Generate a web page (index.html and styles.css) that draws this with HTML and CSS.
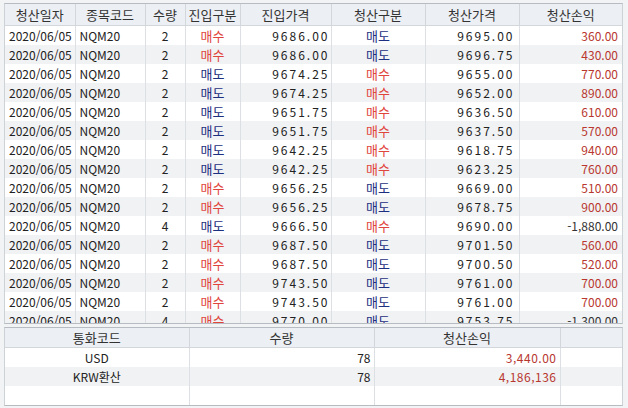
FILE: index.html
```html
<!DOCTYPE html>
<html lang="ko">
<head>
<meta charset="utf-8">
<link rel="stylesheet" href="styles.css">
</head>
<body>
<div class="screen">
  <div class="grid-main">
    <table class="grid">
      <colgroup>
        <col class="c1"><col class="c2"><col class="c3"><col class="c4"><col class="c5"><col class="c6"><col class="c7"><col class="c8">
      </colgroup>
      <thead>
        <tr><th>청산일자</th><th>종목코드</th><th>수량</th><th>진입구분</th><th>진입가격</th><th>청산구분</th><th>청산가격</th><th>청산손익</th></tr>
      </thead>
      <tbody>
        <tr><td class="l">2020/06/05</td><td class="l">NQM20</td><td class="c">2</td><td class="c ko buy">매수</td><td class="r p1">9686.00</td><td class="c ko sell">매도</td><td class="r p2">9695.00</td><td class="r pl pos">360.00</td></tr>
        <tr><td class="l">2020/06/05</td><td class="l">NQM20</td><td class="c">2</td><td class="c ko buy">매수</td><td class="r p1">9686.00</td><td class="c ko sell">매도</td><td class="r p2">9696.75</td><td class="r pl pos">430.00</td></tr>
        <tr><td class="l">2020/06/05</td><td class="l">NQM20</td><td class="c">2</td><td class="c ko sell">매도</td><td class="r p1">9674.25</td><td class="c ko buy">매수</td><td class="r p2">9655.00</td><td class="r pl pos">770.00</td></tr>
        <tr><td class="l">2020/06/05</td><td class="l">NQM20</td><td class="c">2</td><td class="c ko sell">매도</td><td class="r p1">9674.25</td><td class="c ko buy">매수</td><td class="r p2">9652.00</td><td class="r pl pos">890.00</td></tr>
        <tr><td class="l">2020/06/05</td><td class="l">NQM20</td><td class="c">2</td><td class="c ko sell">매도</td><td class="r p1">9651.75</td><td class="c ko buy">매수</td><td class="r p2">9636.50</td><td class="r pl pos">610.00</td></tr>
        <tr><td class="l">2020/06/05</td><td class="l">NQM20</td><td class="c">2</td><td class="c ko sell">매도</td><td class="r p1">9651.75</td><td class="c ko buy">매수</td><td class="r p2">9637.50</td><td class="r pl pos">570.00</td></tr>
        <tr><td class="l">2020/06/05</td><td class="l">NQM20</td><td class="c">2</td><td class="c ko sell">매도</td><td class="r p1">9642.25</td><td class="c ko buy">매수</td><td class="r p2">9618.75</td><td class="r pl pos">940.00</td></tr>
        <tr><td class="l">2020/06/05</td><td class="l">NQM20</td><td class="c">2</td><td class="c ko sell">매도</td><td class="r p1">9642.25</td><td class="c ko buy">매수</td><td class="r p2">9623.25</td><td class="r pl pos">760.00</td></tr>
        <tr><td class="l">2020/06/05</td><td class="l">NQM20</td><td class="c">2</td><td class="c ko buy">매수</td><td class="r p1">9656.25</td><td class="c ko sell">매도</td><td class="r p2">9669.00</td><td class="r pl pos">510.00</td></tr>
        <tr><td class="l">2020/06/05</td><td class="l">NQM20</td><td class="c">2</td><td class="c ko buy">매수</td><td class="r p1">9656.25</td><td class="c ko sell">매도</td><td class="r p2">9678.75</td><td class="r pl pos">900.00</td></tr>
        <tr><td class="l">2020/06/05</td><td class="l">NQM20</td><td class="c">4</td><td class="c ko sell">매도</td><td class="r p1">9666.50</td><td class="c ko buy">매수</td><td class="r p2">9690.00</td><td class="r pl neg">-1,880.00</td></tr>
        <tr><td class="l">2020/06/05</td><td class="l">NQM20</td><td class="c">2</td><td class="c ko buy">매수</td><td class="r p1">9687.50</td><td class="c ko sell">매도</td><td class="r p2">9701.50</td><td class="r pl pos">560.00</td></tr>
        <tr><td class="l">2020/06/05</td><td class="l">NQM20</td><td class="c">2</td><td class="c ko buy">매수</td><td class="r p1">9687.50</td><td class="c ko sell">매도</td><td class="r p2">9700.50</td><td class="r pl pos">520.00</td></tr>
        <tr><td class="l">2020/06/05</td><td class="l">NQM20</td><td class="c">2</td><td class="c ko buy">매수</td><td class="r p1">9743.50</td><td class="c ko sell">매도</td><td class="r p2">9761.00</td><td class="r pl pos">700.00</td></tr>
        <tr><td class="l">2020/06/05</td><td class="l">NQM20</td><td class="c">2</td><td class="c ko buy">매수</td><td class="r p1">9743.50</td><td class="c ko sell">매도</td><td class="r p2">9761.00</td><td class="r pl pos">700.00</td></tr>
        <tr><td class="l">2020/06/05</td><td class="l">NQM20</td><td class="c">4</td><td class="c ko buy">매수</td><td class="r p1">9770.00</td><td class="c ko sell">매도</td><td class="r p2">9753.75</td><td class="r pl neg">-1,300.00</td></tr>
      </tbody>
    </table>
  </div>
  <div class="grid-sum">
    <table class="grid">
      <colgroup>
        <col class="s1"><col class="s2"><col class="s3"><col class="s4">
      </colgroup>
      <thead>
        <tr><th>통화코드</th><th>수량</th><th>청산손익</th><th></th></tr>
      </thead>
      <tbody>
        <tr><td class="c">USD</td><td class="r q">78</td><td class="r pl pos sum">3,440.00</td><td></td></tr>
        <tr><td class="c">KRW환산</td><td class="r q">78</td><td class="r pl pos sum">4,186,136</td><td></td></tr>
        <tr><td class="c"></td><td></td><td></td><td></td></tr>
      </tbody>
    </table>
  </div>
</div>
</body>
</html>
```

FILE: styles.css
```css
html, body {
  margin: 0;
  padding: 0;
}
body {
  width: 628px;
  height: 408px;
  background: #e6eaee;
  font-family: "Noto Sans CJK KR", "Liberation Sans", sans-serif;
  font-size: 12px;
  color: #222;
  overflow: hidden;
}
.screen {
  display: flex;
  flex-direction: column;
  gap: 3px;
  padding: 3px 5px 0 4px;
  background: #f2f3f5;
}
.grid-main {
  height: 319px;
  overflow: hidden;
  border-top: 1px solid #b7bcc2;
  border-left: 1px solid #cdd2d7;
  border-right: 1px solid #cdd2d7;
  border-bottom: 1px solid #b7bcc2;
  background: #fff;
}
.grid-sum {
  height: 77px;
  border-top: 1px solid #b7bcc2;
  border-left: 1px solid #cdd2d7;
  border-right: 1px solid #cdd2d7;
  border-bottom: 1px solid #b7bcc2;
  background: #fff;
  margin-bottom: 3px;
}
.grid {
  border-collapse: collapse;
  table-layout: fixed;
  width: 100%;
}
.c1 { width: 70px; }
.c2 { width: 70px; }
.c3 { width: 40px; }
.c4 { width: 55px; }
.c5 { width: 91px; }
.c6 { width: 94px; }
.c7 { width: 94px; }
.c8 { width: auto; }
.s1 { width: 184px; }
.s2 { width: 185px; }
.s3 { width: 186px; }
.s4 { width: auto; }
.grid th {
  height: 21px;
  padding: 0;
  background: #eceff3;
  color: #333;
  font-size: 13px;
  font-weight: normal;
  text-align: center;
  border-right: 1px solid #d3d7dc;
  border-bottom: 1px solid #d3d7dc;
  line-height: 21px;
}
.grid-sum .grid th {
  height: 19px;
  line-height: 19px;
}
.grid th:last-child,
.grid td:last-child {
  border-right: none;
}
.grid td {
  height: 19px;
  padding: 0;
  line-height: 19px;
  white-space: nowrap;
  overflow: hidden;
  border-right: 1px solid #dcdfe3;
}
.grid tbody tr:nth-child(even) td {
  background: #f1f2f4;
}
.ko { font-size: 13px; }
.l { text-align: left; padding-left: 4px !important; }
.c { text-align: center; }
.r { text-align: right; }
.p1 { padding-right: 1px !important; letter-spacing: 2px; }
.p2 { padding-right: 4px !important; letter-spacing: 2px; }
.q { padding-right: 3px !important; }
.pl { padding-right: 4px !important; }
.sum { letter-spacing: 0.5px; padding-right: 3px !important; }
.buy { color: #e0453c; }
.sell { color: #1d2f80; }
.pos { color: #b8372f; }
.neg { color: #333; }
```
